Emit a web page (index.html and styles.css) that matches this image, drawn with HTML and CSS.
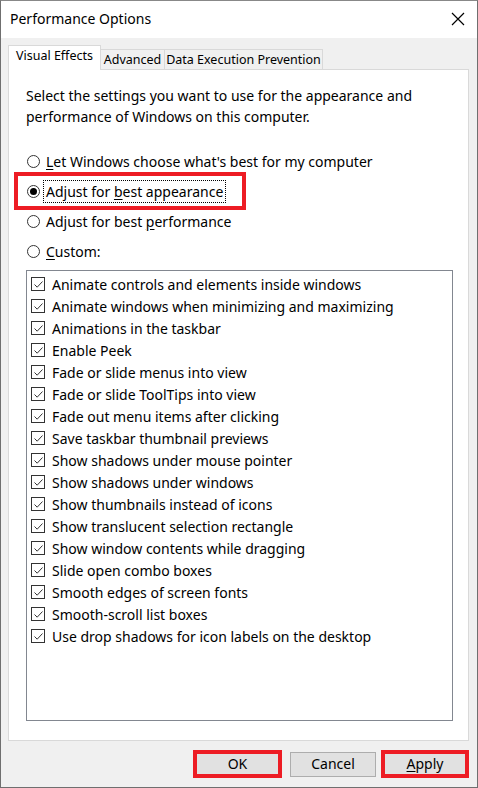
FILE: index.html
```html
<!DOCTYPE html>
<html>
<head>
<meta charset="utf-8">
<link rel="stylesheet" href="styles.css">
</head>
<body>
<div class="window">
  <div class="titlebar">
    <span class="title">Performance Options</span>
    <svg class="close" width="14" height="14" viewBox="0 0 14 14"><path d="M1 1 L13 13 M13 1 L1 13" stroke="#000" stroke-width="1.2" fill="none"/></svg>
  </div>
  <div class="client">
    <div class="tabs">
      <div class="tab active">Visual Effects</div>
      <div class="tab adv">Advanced</div>
      <div class="tab dep">Data Execution Prevention</div>
    </div>
    <div class="panel">
      <p class="intro">Select the settings you want to use for the appearance and performance of Windows on this computer.</p>
      <div class="radios">
        <div class="radio"><span class="rb"></span><span><u>L</u>et Windows choose what's best for my computer</span></div>
        <div class="radio marked"><span class="rb on"></span><span class="focus">Adjust for <u>b</u>est appearance</span></div>
        <div class="radio"><span class="rb"></span><span>Adjust for best <u>p</u>erformance</span></div>
        <div class="radio"><span class="rb"></span><span><u>C</u>ustom:</span></div>
      </div>
      <div class="list">
        <div class="item"><span class="cb"><svg width="11" height="11" viewBox="0 0 11 11"><path d="M1.5 5.5 L4.2 8.2 L9.5 2.5" stroke="#333" stroke-width="1" fill="none"/></svg></span>Animate controls and elements inside windows</div>
        <div class="item"><span class="cb"><svg width="11" height="11" viewBox="0 0 11 11"><path d="M1.5 5.5 L4.2 8.2 L9.5 2.5" stroke="#333" stroke-width="1" fill="none"/></svg></span>Animate windows when minimizing and maximizing</div>
        <div class="item"><span class="cb"><svg width="11" height="11" viewBox="0 0 11 11"><path d="M1.5 5.5 L4.2 8.2 L9.5 2.5" stroke="#333" stroke-width="1" fill="none"/></svg></span>Animations in the taskbar</div>
        <div class="item"><span class="cb"><svg width="11" height="11" viewBox="0 0 11 11"><path d="M1.5 5.5 L4.2 8.2 L9.5 2.5" stroke="#333" stroke-width="1" fill="none"/></svg></span>Enable Peek</div>
        <div class="item"><span class="cb"><svg width="11" height="11" viewBox="0 0 11 11"><path d="M1.5 5.5 L4.2 8.2 L9.5 2.5" stroke="#333" stroke-width="1" fill="none"/></svg></span>Fade or slide menus into view</div>
        <div class="item"><span class="cb"><svg width="11" height="11" viewBox="0 0 11 11"><path d="M1.5 5.5 L4.2 8.2 L9.5 2.5" stroke="#333" stroke-width="1" fill="none"/></svg></span>Fade or slide ToolTips into view</div>
        <div class="item"><span class="cb"><svg width="11" height="11" viewBox="0 0 11 11"><path d="M1.5 5.5 L4.2 8.2 L9.5 2.5" stroke="#333" stroke-width="1" fill="none"/></svg></span>Fade out menu items after clicking</div>
        <div class="item"><span class="cb"><svg width="11" height="11" viewBox="0 0 11 11"><path d="M1.5 5.5 L4.2 8.2 L9.5 2.5" stroke="#333" stroke-width="1" fill="none"/></svg></span>Save taskbar thumbnail previews</div>
        <div class="item"><span class="cb"><svg width="11" height="11" viewBox="0 0 11 11"><path d="M1.5 5.5 L4.2 8.2 L9.5 2.5" stroke="#333" stroke-width="1" fill="none"/></svg></span>Show shadows under mouse pointer</div>
        <div class="item"><span class="cb"><svg width="11" height="11" viewBox="0 0 11 11"><path d="M1.5 5.5 L4.2 8.2 L9.5 2.5" stroke="#333" stroke-width="1" fill="none"/></svg></span>Show shadows under windows</div>
        <div class="item"><span class="cb"><svg width="11" height="11" viewBox="0 0 11 11"><path d="M1.5 5.5 L4.2 8.2 L9.5 2.5" stroke="#333" stroke-width="1" fill="none"/></svg></span>Show thumbnails instead of icons</div>
        <div class="item"><span class="cb"><svg width="11" height="11" viewBox="0 0 11 11"><path d="M1.5 5.5 L4.2 8.2 L9.5 2.5" stroke="#333" stroke-width="1" fill="none"/></svg></span>Show translucent selection rectangle</div>
        <div class="item"><span class="cb"><svg width="11" height="11" viewBox="0 0 11 11"><path d="M1.5 5.5 L4.2 8.2 L9.5 2.5" stroke="#333" stroke-width="1" fill="none"/></svg></span>Show window contents while dragging</div>
        <div class="item"><span class="cb"><svg width="11" height="11" viewBox="0 0 11 11"><path d="M1.5 5.5 L4.2 8.2 L9.5 2.5" stroke="#333" stroke-width="1" fill="none"/></svg></span>Slide open combo boxes</div>
        <div class="item"><span class="cb"><svg width="11" height="11" viewBox="0 0 11 11"><path d="M1.5 5.5 L4.2 8.2 L9.5 2.5" stroke="#333" stroke-width="1" fill="none"/></svg></span>Smooth edges of screen fonts</div>
        <div class="item"><span class="cb"><svg width="11" height="11" viewBox="0 0 11 11"><path d="M1.5 5.5 L4.2 8.2 L9.5 2.5" stroke="#333" stroke-width="1" fill="none"/></svg></span>Smooth-scroll list boxes</div>
        <div class="item"><span class="cb"><svg width="11" height="11" viewBox="0 0 11 11"><path d="M1.5 5.5 L4.2 8.2 L9.5 2.5" stroke="#333" stroke-width="1" fill="none"/></svg></span>Use drop shadows for icon labels on the desktop</div>
      </div>
    </div>
    <div class="buttons">
      <button class="btn ok marked-btn">OK</button>
      <button class="btn cancel">Cancel</button>
      <button class="btn apply marked-btn"><u>A</u>pply</button>
    </div>
  </div>
</div>
</body>
</html>
```

FILE: styles.css
```css
*, *::before, *::after { box-sizing: border-box; }
html, body { margin: 0; padding: 0; }
body {
  width: 478px;
  height: 788px;
  overflow: hidden;
  font-family: "Segoe UI", "Noto Sans", sans-serif;
  font-size: 14px;
  color: #000;
  background: #fff;
}
.window {
  width: 478px;
  height: 788px;
  border: 1px solid #6f6f6f;
  border-top: 1px solid #888;
  display: flex;
  flex-direction: column;
  background: #f0f0f0;
}
.titlebar {
  height: 37px;
  background: #fff;
  display: flex;
  align-items: center;
  justify-content: space-between;
  padding: 0 12px 0 9px;
  flex: none;
}
.title { font-size: 14px; line-height: 20px; padding-bottom: 2px; }
.close { display: block; margin-bottom: 1px; }
.client {
  flex: 1;
  padding: 8px 8px 0 7px;
  display: flex;
  flex-direction: column;
}
.tabs {
  display: flex;
  align-items: flex-end;
  height: 23px;
  position: relative;
  z-index: 1;
}
.tab {
  height: 20px;
  border: 1px solid #d9d9d9;
  border-bottom: none;
  background: #f0f0f0;
  font-size: 12.5px;
  line-height: 19px;
  text-align: center;
  white-space: nowrap;
  margin-left: -1px;
}
.tab.adv { width: 65px; }
.tab.dep { width: 159px; }
.tab.active {
  width: 93px;
  height: 25px;
  margin-bottom: -1px;
  background: #fff;
  margin-left: 0;
  line-height: 20px;
  position: relative;
  z-index: 2;
}
.panel {
  height: 672px;
  background: #fff;
  border: 1px solid #d9d9d9;
  padding: 15px 14px 0 17px;
  display: flex;
  flex-direction: column;
}
.intro {
  margin: 0;
  line-height: 21px;
  width: 430px;
}
.radios {
  margin-top: 19px;
  display: flex;
  flex-direction: column;
  position: relative;
}
.radio {
  height: 30px;
  display: flex;
  align-items: center;
  gap: 6px;
  position: relative;
}
.radio u, .btn u { text-decoration: underline; text-underline-offset: 2px; }
.rb {
  width: 13px;
  height: 13px;
  border-radius: 50%;
  border: 1px solid #333;
  margin-left: 1px;
  display: flex;
  align-items: center;
  justify-content: center;
  background: #fff;
  flex: none;
}
.rb.on::after {
  content: "";
  width: 7px;
  height: 7px;
  border-radius: 50%;
  background: #000;
}
.focus {
  outline: 1px dotted #000;
  outline-offset: 1px;
  padding: 0 1px;
  margin-left: -1px;
}
.radio.marked::before {
  content: "";
  position: absolute;
  left: -12px;
  top: -4px;
  width: 232px;
  height: 38px;
  border: 4px solid #ed1c24;
  pointer-events: none;
}
.list {
  margin-top: 4px;
  height: 451px;
  width: 427px;
  border: 1px solid #828790;
  padding-top: 2px;
}
.item {
  height: 22px;
  display: flex;
  align-items: center;
  padding-left: 4px;
  white-space: nowrap;
}
.cb {
  width: 14px;
  height: 14px;
  border: 1px solid #333;
  margin-right: 7px;
  display: flex;
  align-items: center;
  justify-content: center;
  flex: none;
}
.cb svg { display: block; }
.buttons {
  display: flex;
  justify-content: flex-end;
  margin-top: 9px;
  align-items: center;
  height: 28px;
}
.btn {
  font-family: "Segoe UI", "Noto Sans", sans-serif;
  font-size: 14px;
  color: #000;
  background: #e1e1e1;
  border: 1px solid #adadad;
  padding: 0;
  height: 25px;
  width: 86px;
  line-height: 20px;
}
.btn.marked-btn {
  border: 4px solid #ed1c24;
  height: 28px;
}
.btn.ok { width: 89px; margin-right: 8px; }
.btn.cancel { margin-right: 5px; }
.btn.apply { width: 88px; margin-right: 0; }
```
